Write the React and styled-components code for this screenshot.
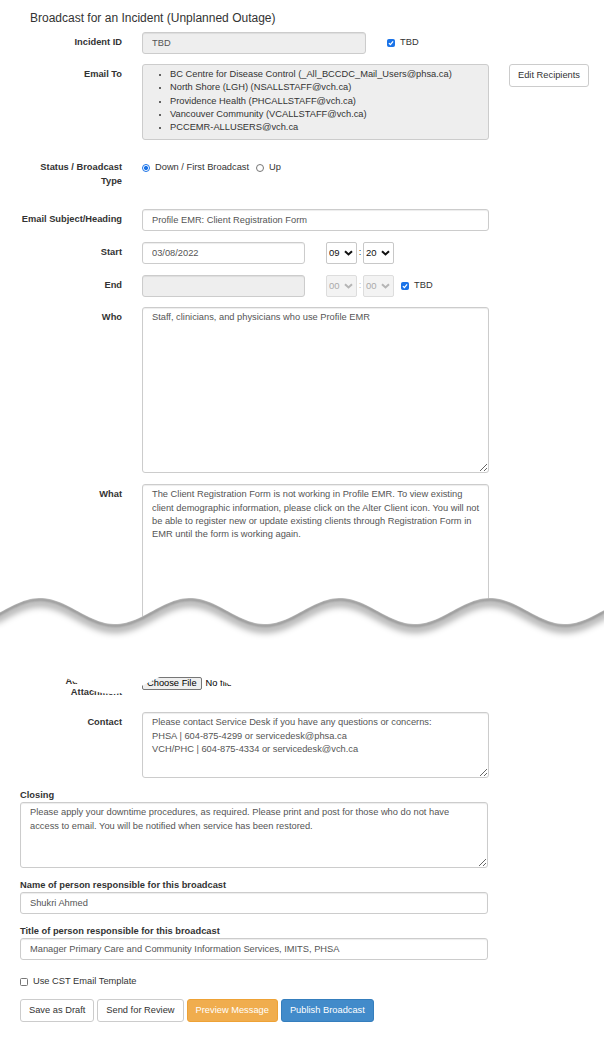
import React from "react";
import styled, { createGlobalStyle } from "styled-components";

const GlobalStyle = createGlobalStyle`
  html, body {
    margin: 0;
    padding: 0;
    background: #fff;
  }
  body {
    font-family: "Liberation Sans", Arial, sans-serif;
    font-size: 9.3px;
    line-height: 13.6px;
    color: #333;
  }
  * {
    box-sizing: border-box;
  }
`;

const recipients = [
  "BC Centre for Disease Control (_All_BCCDC_Mail_Users@phsa.ca)",
  "North Shore (LGH) (NSALLSTAFF@vch.ca)",
  "Providence Health (PHCALLSTAFF@vch.ca)",
  "Vancouver Community (VCALLSTAFF@vch.ca)",
  "PCCEMR-ALLUSERS@vch.ca",
];

const whatText =
  "The Client Registration Form is not working in Profile EMR. To view existing\n" +
  "client demographic information, please click on the Alter Client icon. You will not\n" +
  "be able to register new or update existing clients through Registration Form in\n" +
  "EMR until the form is working again.";

const contactText =
  "Please contact Service Desk if you have any questions or concerns:\n" +
  "PHSA | 604-875-4299 or servicedesk@phsa.ca\n" +
  "VCH/PHC | 604-875-4334 or servicedesk@vch.ca";

const closingText =
  "Please apply your downtime procedures, as required. Please print and post for those who do not have\n" +
  "access to email. You will be notified when service has been restored.";

// torn edge between the two halves of the form (svg sits 590px down the page)
const upperY = (x) => 21 - 13 * Math.cos((2 * Math.PI * (x - 190)) / 150);
const lowerY = (x) => 92 + 12 * Math.cos((2 * Math.PI * (x - 112)) / 150);
const xs = [];
for (let x = -6; x <= 610; x += 3) xs.push(x);
const upperEdge = xs
  .map((x, i) => `${i ? "L" : "M"}${x},${upperY(x).toFixed(2)}`)
  .join(" ");
const gapShape =
  upperEdge +
  " " +
  xs
    .slice()
    .reverse()
    .map((x) => `L${x},${lowerY(x).toFixed(2)}`)
    .join(" ") +
  " Z";

const TornEdge = () => (
  <Tear width="604" height="110" viewBox="0 0 604 110">
    <defs>
      <filter id="tearSoft" x="-5%" y="-80%" width="110%" height="260%">
        <feGaussianBlur stdDeviation="3.2" />
      </filter>
      <filter id="tearTight" x="-5%" y="-80%" width="110%" height="260%">
        <feGaussianBlur stdDeviation="1" />
      </filter>
      <clipPath id="tearGap">
        <path d={gapShape} />
      </clipPath>
    </defs>
    <path d={gapShape} fill="#fff" />
    <g clipPath="url(#tearGap)">
      <path
        d={upperEdge}
        transform="translate(0,5)"
        fill="none"
        stroke="#000"
        strokeOpacity="0.3"
        strokeWidth="8"
        filter="url(#tearSoft)"
      />
      <path
        d={upperEdge}
        transform="translate(0,1.5)"
        fill="none"
        stroke="#000"
        strokeOpacity="0.32"
        strokeWidth="2.5"
        filter="url(#tearTight)"
      />
    </g>
  </Tear>
);

const Check = ({ on }) => (
  <CheckBox $on={on}>
    {on && (
      <svg width="6" height="6" viewBox="0 0 6 6">
        <path
          d="M0.9 3.1 L2.4 4.6 L5.1 1.3"
          fill="none"
          stroke="#fff"
          strokeWidth="1.3"
        />
      </svg>
    )}
  </CheckBox>
);

const TimeSelect = ({ value, disabled }) => (
  <SelectWrap>
    <Select disabled={disabled} defaultValue={value}>
      <option>{value}</option>
    </Select>
    <Chevron width="9" height="6" viewBox="0 0 9 6" $disabled={disabled}>
      <path d="M1 1.2 L4.5 4.5 L8 1.2" fill="none" strokeWidth="2" />
    </Chevron>
  </SelectWrap>
);

const App = () => {
  return (
    <>
      <GlobalStyle />
      <Page>
        <Heading>Broadcast for an Incident (Unplanned Outage)</Heading>

        <Row $gap={10}>
          <Label>Incident ID</Label>
          <Input $w={224} disabled defaultValue="TBD" />
          <Option $left={21}>
            <Check on />
            TBD
          </Option>
        </Row>

        <Row $gap={17}>
          <Label>Email To</Label>
          <EmailBox>
            <List>
              {recipients.map((r) => (
                <li key={r}>{r}</li>
              ))}
            </List>
          </EmailBox>
          <Button $left={20} $w={80}>
            Edit Recipients
          </Button>
        </Row>

        <Row $gap={21}>
          <Label>Status / Broadcast Type</Label>
          <Radios>
            <Radio $on />
            <span>Down / First Broadcast</span>
            <Radio $spaced />
            <span>Up</span>
          </Radios>
        </Row>

        <Row $gap={11}>
          <Label>Email Subject/Heading</Label>
          <Input defaultValue="Profile EMR: Client Registration Form" />
        </Row>

        <Row $gap={11}>
          <Label>Start</Label>
          <Input $w={163} defaultValue="03/08/2022" />
          <Times>
            <TimeSelect value="09" />
            <Colon>:</Colon>
            <TimeSelect value="20" />
          </Times>
        </Row>

        <Row $gap={10}>
          <Label>End</Label>
          <Input $w={163} disabled />
          <Times>
            <TimeSelect value="00" disabled />
            <Colon $muted>:</Colon>
            <TimeSelect value="00" disabled />
          </Times>
          <Option $left={7}>
            <Check on />
            TBD
          </Option>
        </Row>

        <Row $gap={11}>
          <Label>Who</Label>
          <TextArea
            $h={166}
            defaultValue="Staff, clinicians, and physicians who use Profile EMR"
          />
        </Row>

        <Torn>
          <Row $gap={12}>
            <Label>What</Label>
            <TextArea $h={180} defaultValue={whatText} />
          </Row>

          <Row $gap={14}>
            <Label $top={0} $tight>
              <ClippedLine>Additional</ClippedLine>
              Attachment
            </Label>
            <FileButton>Choose File</FileButton>
            <FileName>No file chosen</FileName>
          </Row>

          <TornEdge />
        </Torn>

        <Row $gap={10}>
          <Label>Contact</Label>
          <TextArea $h={66} defaultValue={contactText} />
        </Row>

        <Block $gap={10}>
          <BlockLabel>Closing</BlockLabel>
          <TextArea $w={468} $h={66} defaultValue={closingText} />
        </Block>

        <Block $gap={10}>
          <BlockLabel>Name of person responsible for this broadcast</BlockLabel>
          <Input $w={468} defaultValue="Shukri Ahmed" />
        </Block>

        <Block $gap={15}>
          <BlockLabel>Title of person responsible for this broadcast</BlockLabel>
          <Input
            $w={468}
            defaultValue="Manager Primary Care and Community Information Services, IMITS, PHSA"
          />
        </Block>

        <Block $gap={10}>
          <Option>
            <Check />
            Use CST Email Template
          </Option>
        </Block>

        <Actions>
          <Button>Save as Draft</Button>
          <Button>Send for Review</Button>
          <Button $kind="warning">Preview Message</Button>
          <Button $kind="primary">Publish Broadcast</Button>
        </Actions>
      </Page>
    </>
  );
};

const Page = styled.div`
  width: 604px;
  padding: 10px 0 28px;
`;

const Heading = styled.h4`
  margin: 0 0 5px 30px;
  font-size: 12px;
  font-weight: normal;
  line-height: 17px;
  color: #333;
`;

const Row = styled.div`
  display: flex;
  align-items: flex-start;
  padding-left: 20px;
  margin-bottom: ${(p) => p.$gap ?? 10}px;
`;

const Label = styled.label`
  flex: 0 0 102px;
  margin-right: 20px;
  padding-top: ${(p) => p.$top ?? 4}px;
  text-align: right;
  font-weight: bold;
  line-height: ${(p) => (p.$tight ? "11px" : "13.6px")};
  color: #333;
`;

const ClippedLine = styled.span`
  display: block;
  padding-right: 11px;
`;

const Input = styled.input`
  display: block;
  width: ${(p) => p.$w ?? 347}px;
  height: 22px;
  margin: 0;
  padding: 0 9px;
  border: 1px solid #ccc;
  border-radius: 3px;
  background: ${(p) => (p.disabled ? "#eee" : "#fff")};
  box-shadow: inset 0 1px 1px rgba(0, 0, 0, 0.075);
  font: inherit;
  color: #555;
  outline: none;
`;

const TextArea = styled.textarea`
  display: block;
  width: ${(p) => p.$w ?? 347}px;
  height: ${(p) => p.$h}px;
  margin: 0;
  padding: 3px 4px 3px 9px;
  border: 1px solid #ccc;
  border-radius: 3px;
  background: #fff;
  box-shadow: inset 0 1px 1px rgba(0, 0, 0, 0.075);
  font: inherit;
  line-height: 13.33px;
  color: #555;
  outline: none;
`;

const Option = styled.span`
  display: inline-flex;
  align-items: center;
  gap: 5px;
  height: ${(p) => (p.$left ? "22px" : "14px")};
  margin-left: ${(p) => p.$left ?? 0}px;
  color: #333;
`;

const CheckBox = styled.span`
  display: inline-flex;
  align-items: center;
  justify-content: center;
  width: 8px;
  height: 8px;
  border-radius: 1.5px;
  border: 1px solid ${(p) => (p.$on ? "#1a73e8" : "#767676")};
  background: ${(p) => (p.$on ? "#1a73e8" : "#fff")};
`;

const EmailBox = styled.div`
  width: 347px;
  height: 76px;
  padding-top: 3px;
  border: 1px solid #ccc;
  border-radius: 3px;
  background: #eee;
`;

const List = styled.ul`
  margin: 0;
  padding-left: 27px;
  line-height: 13.33px;
  color: #333;

  li::marker {
    font-size: 8px;
  }
`;

const Radios = styled.div`
  display: flex;
  align-items: center;
  padding-top: 4px;
  line-height: 13.6px;
  color: #333;
`;

const Radio = styled.span`
  flex: 0 0 8px;
  height: 8px;
  margin: 1px 5px 0 ${(p) => (p.$spaced ? "7px" : "0")};
  border-radius: 50%;
  border: 1px solid ${(p) => (p.$on ? "#1a73e8" : "#767676")};
  background: ${(p) =>
    p.$on
      ? "radial-gradient(circle, #1a73e8 0 1.8px, #fff 2.3px)"
      : "#fff"};
`;

const Times = styled.div`
  display: flex;
  align-items: center;
  margin-left: 21px;
`;

const Colon = styled.span`
  width: 6px;
  text-align: center;
  color: ${(p) => (p.$muted ? "#bbb" : "#333")};
`;

const SelectWrap = styled.span`
  position: relative;
  display: inline-block;
  width: 31px;
  height: 22px;
`;

const Select = styled.select`
  appearance: none;
  width: 100%;
  height: 100%;
  margin: 0;
  padding: 0 0 0 2px;
  border: 1px solid ${(p) => (p.disabled ? "#ddd" : "#c8c8c8")};
  border-radius: 2px;
  background: ${(p) => (p.disabled ? "#f3f3f3" : "#fff")};
  font: inherit;
  font-size: 9.5px;
  color: ${(p) => (p.disabled ? "#aaa" : "#111")};
  outline: none;
  opacity: 1;
`;

const Chevron = styled.svg`
  position: absolute;
  right: 4px;
  top: 8px;
  pointer-events: none;
  stroke: ${(p) => (p.$disabled ? "#b5b5b5" : "#111")};
`;

const Torn = styled.div`
  position: relative;
`;

const Tear = styled.svg`
  position: absolute;
  left: 0;
  top: 106px;
  display: block;
`;

const FileButton = styled.button`
  height: 13px;
  margin: 1px 0 0;
  padding: 0 4px;
  border: 1px solid #767676;
  border-radius: 2px;
  background: #efefef;
  font: inherit;
  line-height: 11px;
  color: #000;
`;

const FileName = styled.span`
  margin: 0 0 0 4px;
  line-height: 15px;
  color: #000;
`;

const Block = styled.div`
  display: flex;
  flex-direction: column;
  align-items: flex-start;
  padding-left: 20px;
  margin-bottom: ${(p) => p.$gap ?? 10}px;
`;

const BlockLabel = styled.div`
  font-weight: bold;
  line-height: 14px;
  color: #333;
`;

const Actions = styled.div`
  display: flex;
  gap: 3px;
  padding-left: 20px;
`;

const tones = {
  default: { bg: "#fff", border: "#ccc", color: "#333" },
  warning: { bg: "#f0ad4e", border: "#eea236", color: "#fff" },
  primary: { bg: "#428bca", border: "#357ebd", color: "#fff" },
};

const Button = styled.button`
  height: 23px;
  ${(p) => (p.$w ? `width: ${p.$w}px;` : "")}
  margin: 0 0 0 ${(p) => p.$left ?? 0}px;
  padding: 0 8px;
  border: 1px solid ${(p) => tones[p.$kind ?? "default"].border};
  border-radius: 3px;
  background: ${(p) => tones[p.$kind ?? "default"].bg};
  font: inherit;
  color: ${(p) => tones[p.$kind ?? "default"].color};
  white-space: nowrap;
  cursor: pointer;
`;

export default App;
